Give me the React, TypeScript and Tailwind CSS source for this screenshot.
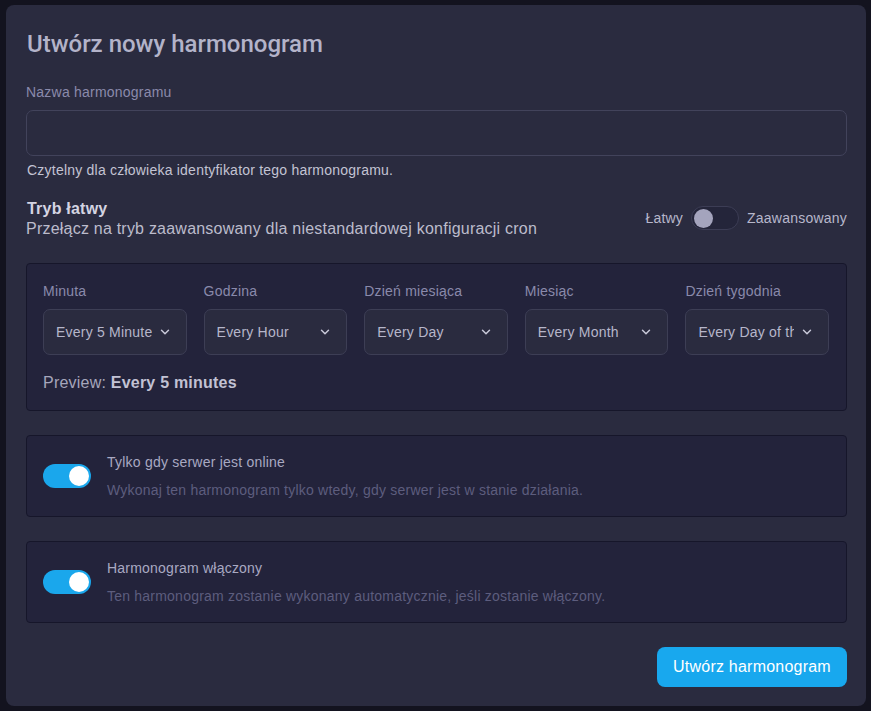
import React from 'react';
import { ChevronDown } from 'lucide-react';

const fields = [
  { label: 'Minuta', value: 'Every 5 Minutes' },
  { label: 'Godzina', value: 'Every Hour' },
  { label: 'Dzień miesiąca', value: 'Every Day' },
  { label: 'Miesiąc', value: 'Every Month' },
  { label: 'Dzień tygodnia', value: 'Every Day of the Week' },
];

function Toggle() {
  return (
    <div className="w-12 h-6 shrink-0 rounded-full bg-[#1aa7ec] flex items-center justify-end px-[2px]">
      <div className="w-5 h-5 rounded-full bg-white" />
    </div>
  );
}

function OptionBox({ title, desc }: { title: string; desc: string }) {
  return (
    <div className="h-[82px] rounded-[4px] border border-[#16162a] bg-[#23233b] flex items-center pl-[16px] gap-4">
      <Toggle />
      <div className="flex flex-col gap-[10px]">
        <span className="text-[14px] leading-[18px] text-[#a9a9c2]">{title}</span>
        <span className="text-[14px] leading-[18px] text-[#5d5d7e]">{desc}</span>
      </div>
    </div>
  );
}

export default function App() {
  return (
    <div className="w-[871px] h-[711px] bg-[#13131f] p-[5px] pl-[6px] pr-[5px] tracking-[0.22px]" style={{ fontFamily: '"Liberation Sans", Arial, sans-serif' }}>
      <div className="h-full rounded-[8px] bg-[#2a2b3f] pl-[20px] pr-[19px] pt-[25px] flex flex-col">
        <h1 className="text-[24px] leading-[28px] font-medium text-[#b3b3c9] ml-[1px] tracking-normal" style={{ fontFamily: 'Roboto, sans-serif' }}>
          Utwórz nowy harmonogram
        </h1>

        <label className="mt-[25px] text-[14px] leading-[18px] text-[#8a8aab]">Nazwa harmonogramu</label>
        <div className="mt-[9px] h-[46px] rounded-[7px] border border-[#42435b] bg-[#2a2b3f]" />
        <p className="mt-[6px] text-[14px] leading-[17px] text-[#c3c3d3] ml-[1px]">
          Czytelny dla człowieka identyfikator tego harmonogramu.
        </p>

        <div className="mt-[20px] flex items-center justify-between">
          <div className="flex flex-col">
            <span className="text-[16px] leading-[20px] font-bold text-[#d4d4e2] ml-[1px]">Tryb łatwy</span>
            <span className="text-[16px] leading-[20px] text-[#bcbccc]">
              Przełącz na tryb zaawansowany dla niestandardowej konfiguracji cron
            </span>
          </div>
          <div className="flex items-center gap-2 mb-[2px]">
            <span className="text-[14px] text-[#b7b7cb]">Łatwy</span>
            <div className="w-12 h-6 rounded-full border border-[#3c3d55] bg-[#24253a] flex items-center px-[2px]">
              <div className="w-[19px] h-[19px] rounded-full bg-[#a4a4bd]" />
            </div>
            <span className="text-[14px] text-[#b7b7cb]">Zaawansowany</span>
          </div>
        </div>

        <div className="mt-[24px] h-[148px] rounded-[4px] border border-[#16162a] bg-[#23233b] px-[16px] pt-[18px]">
          <div className="grid grid-cols-5 gap-x-[17px] pr-[1px]">
            {fields.map((f) => (
              <div key={f.label} className="flex flex-col">
                <span className="text-[14px] leading-[18px] text-[#8a8aab]">{f.label}</span>
                <div className="mt-[9px] h-[46px] rounded-[7px] border border-[#3d3e55] bg-[#2a2b3f] flex items-center pl-[12px] pr-[14px] gap-[6px]">
                  <span className="flex-1 overflow-hidden whitespace-nowrap text-[14px] text-[#b6b6ca]">{f.value}</span>
                  <ChevronDown className="w-[14px] h-[14px] text-[#c9c9d9] shrink-0" strokeWidth={2.5} />
                </div>
              </div>
            ))}
          </div>
          <p className="mt-[18px] text-[16px] leading-[20px] text-[#a6a6bc]">
            Preview: <span className="font-bold text-[#c2c2d4]">Every 5 minutes</span>
          </p>
        </div>

        <div className="mt-[24px]">
          <OptionBox
            title="Tylko gdy serwer jest online"
            desc="Wykonaj ten harmonogram tylko wtedy, gdy serwer jest w stanie działania."
          />
        </div>
        <div className="mt-[24px]">
          <OptionBox
            title="Harmonogram włączony"
            desc="Ten harmonogram zostanie wykonany automatycznie, jeśli zostanie włączony."
          />
        </div>

        <div className="mt-[24px] flex justify-end">
          <button className="h-[40px] w-[190px] rounded-[8px] bg-[#18a8ee] text-white text-[16px]">
            Utwórz harmonogram
          </button>
        </div>
      </div>
    </div>
  );
}
